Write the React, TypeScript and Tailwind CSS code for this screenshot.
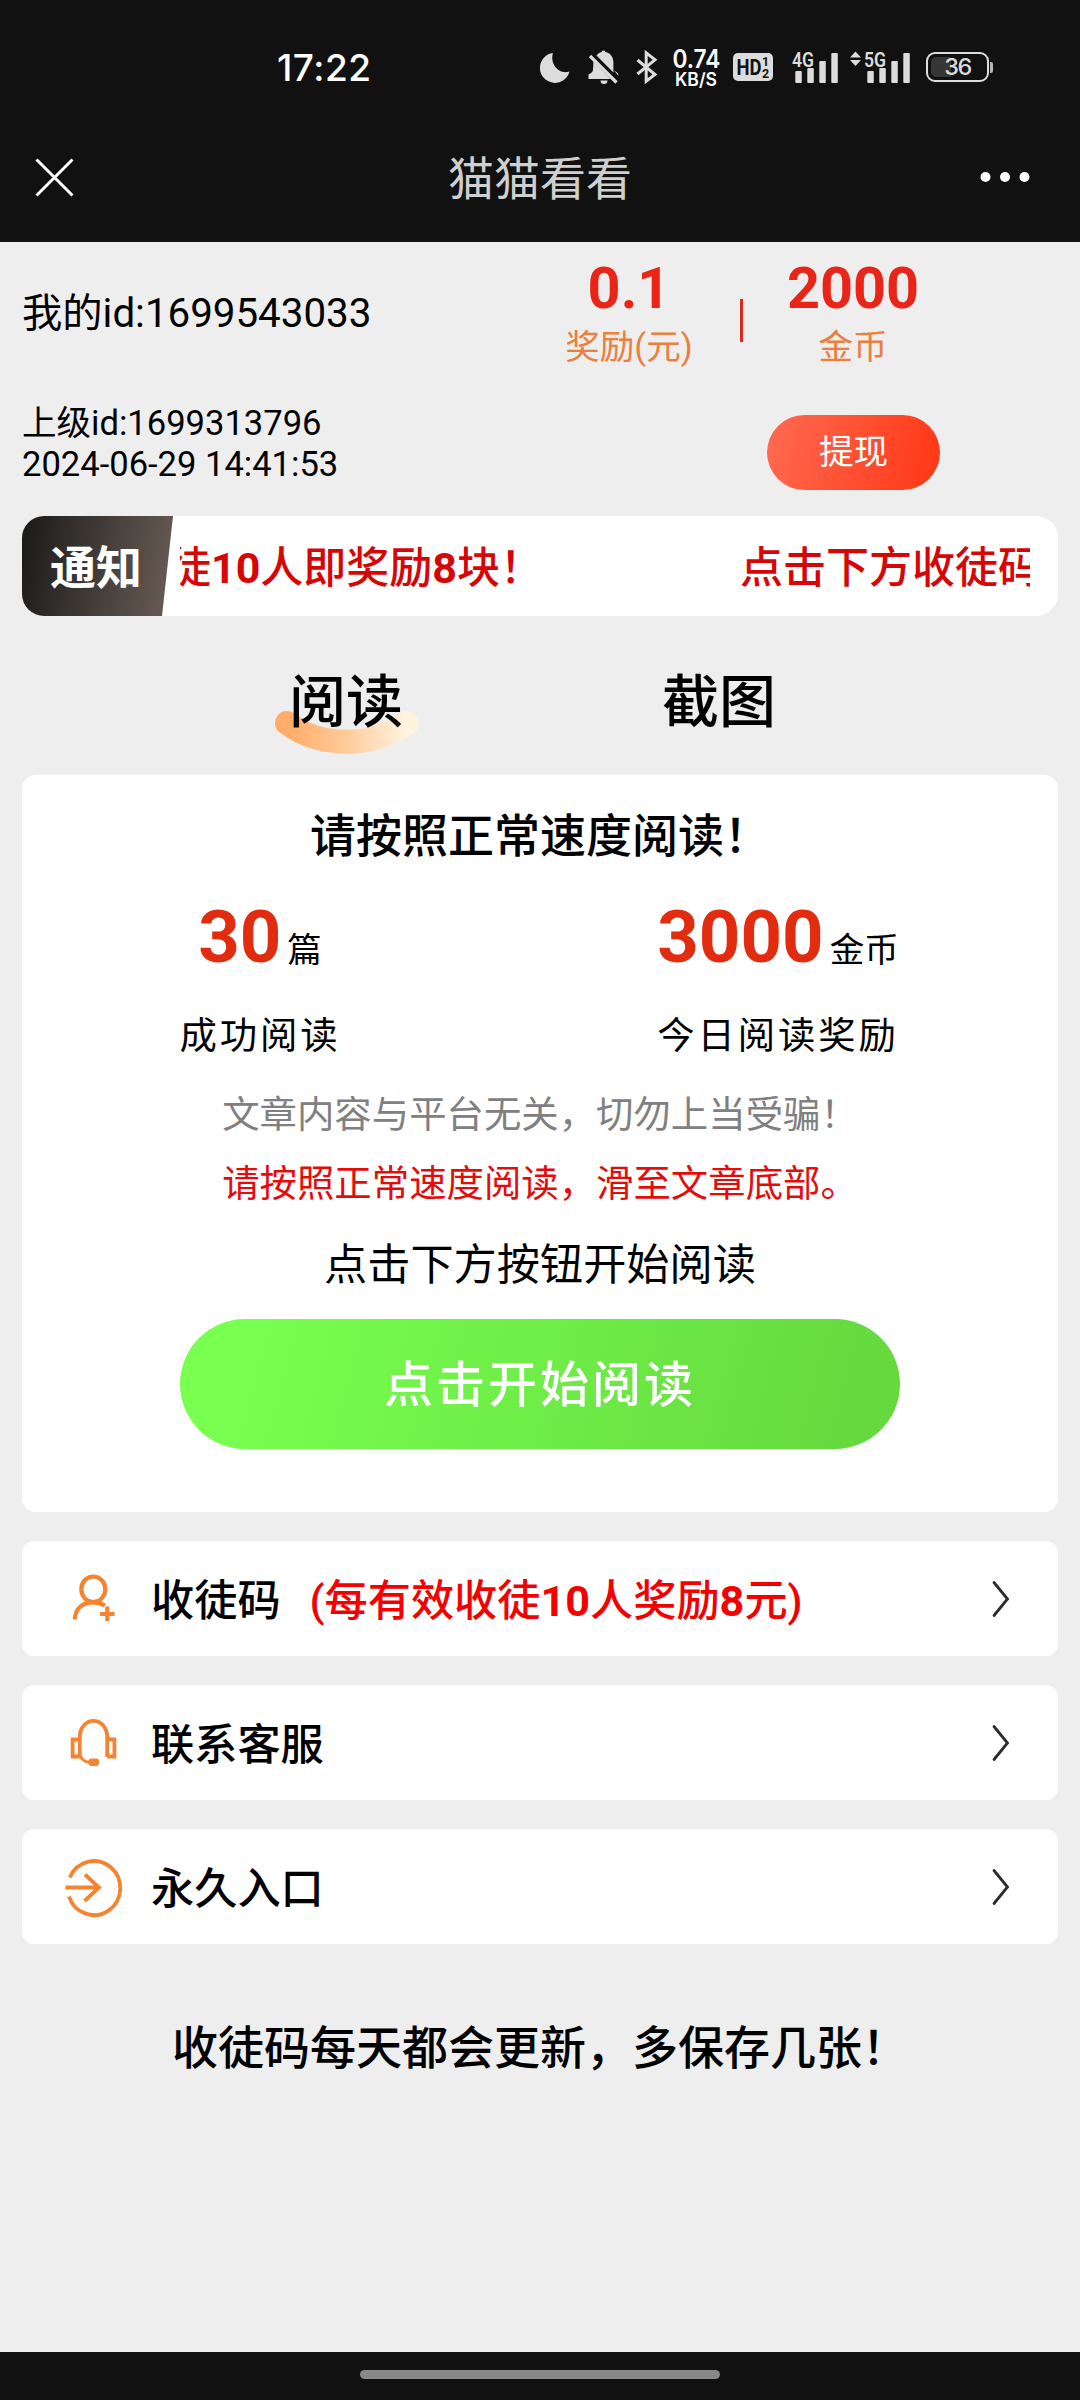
import React from "react";

const ORANGE = "#f6832f";

function SignalIcon({ label, arrows }: { label: string; arrows?: boolean }) {
  return (
    <svg width="64" height="36" viewBox="0 0 64 36" fill="#dcdcdc">
      {arrows && <path d="M5.5 2.5 11 8.5H0zM5.5 17 11 11H0z" />}
      <text x="14" y="17.500" fontSize="21" fontWeight="600" fontFamily="Roboto, sans-serif" textLength="22" lengthAdjust="spacingAndGlyphs">
        {label}
      </text>
      <rect x="17.3" y="22" width="6.5" height="12" rx="1" />
      <rect x="29.3" y="19" width="6.5" height="15" rx="1" />
      <rect x="41.3" y="12" width="6.5" height="22" rx="1" />
      <rect x="53.3" y="4" width="6.5" height="30" rx="1" />
    </svg>
  );
}

function StatusBar() {
  return (
    <div className="flex h-[134px] items-center pl-[277px] font-['Inter','Roboto',sans-serif]">
      <div className="w-[262px] pt-[1px] text-[37px] leading-[44px] font-medium tracking-[0.5px] text-white">17:22</div>
      <svg width="32" height="36" viewBox="0 0 32 36" fill="#dcdcdc">
        <path d="M14 4A15 15 0 1 0 30.500 22.500C20 26 10.500 15 14 4z" />
      </svg>
      <svg className="ml-[16px]" width="34" height="38" viewBox="0 0 34 38" fill="#dcdcdc">
        <path d="M9.500 7.500C11 5.500 13 4.300 14.600 4a2 2 0 0 1 3.800 0c5 1 8 5.200 8 10.500v10zM6.500 13l17 18H1.500v-4.500c2.500-1.200 4.500-2.500 4.500-5zM13.500 32.500h7a3.500 3.500 0 0 1-7 0z" />
        <path d="M27 22.500c2 1.500 4.500 2 4.500 5.500z" />
        <path d="M3 8 29.500 34.500" stroke="#dcdcdc" strokeWidth="3.200" />
      </svg>
      <svg className="ml-[15px]" width="22" height="36" viewBox="0 0 22 36" fill="none" stroke="#dcdcdc" strokeWidth="3">
        <path d="M1.500 11 19 25.500 10.200 32.200V3.800L19 10.800 1.500 25" />
      </svg>
      <svg className="ml-[13px] overflow-visible" width="52" height="44" viewBox="0 0 52 44" fill="#fff" fontFamily="Inter, sans-serif" fontWeight="600">
        <text x="1.500" y="22.500" fontSize="26" textLength="48" lengthAdjust="spacingAndGlyphs">0.74</text>
        <text x="4" y="41" fontSize="18" textLength="42" lengthAdjust="spacingAndGlyphs">KB/S</text>
      </svg>
      <svg className="ml-[10px] overflow-visible" width="40" height="28" viewBox="0 0 40 28" fill="#111" fontFamily="Roboto, sans-serif" fontWeight="700">
        <rect width="40" height="28" rx="5" fill="#dcdcdc" />
        <text x="3.500" y="22" fontSize="22.500" textLength="25" lengthAdjust="spacingAndGlyphs">HD</text>
        <text x="29" y="13" fontSize="12.500">1</text>
        <text x="29" y="24.500" fontSize="12.500">2</text>
      </svg>
      <div className="ml-[5px]">
        <SignalIcon label="4G" />
      </div>
      <div className="ml-[8px]">
        <SignalIcon label="5G" arrows />
      </div>
      <div className="ml-[12px] flex items-center">
        <div className="relative flex h-[30px] w-[63px] items-center justify-center rounded-[9px] border-2 border-[#dcdcdc]">
          <div className="absolute top-[3px] left-[3px] h-[20px] w-[20px] rounded-l-[5px] bg-[#363636]" />
          <span className="relative text-[23.500px] leading-[28px] font-medium tracking-[-1.500px] text-[#dcdcdc]">36</span>
        </div>
        <div className="ml-[1px] h-[11px] w-[3px] rounded-r-[2px] bg-[#b5b5b5]" />
      </div>
    </div>
  );
}

function NavBar() {
  return (
    <div className="flex h-[108px] items-start justify-between px-[34px] pt-[13px]">
      <svg className="mt-[9px]" width="120" height="44" viewBox="0 0 120 44" fill="none" stroke="#fff" strokeWidth="3">
        <path d="M2.500 3.500 38.500 39.500M38.500 3.500 2.500 39.500" />
      </svg>
      <h1 className="h-[64px] text-[46px] leading-[64px] text-[#cfcfcf]">猫猫看看</h1>
      <svg className="mt-[20px]" width="120" height="20" viewBox="0 0 120 20" fill="#fff">
        <circle cx="59.5" cy="10" r="5" />
        <circle cx="79" cy="10" r="5" />
        <circle cx="98.5" cy="10" r="5" />
      </svg>
    </div>
  );
}

function Profile() {
  return (
    <section className="flex h-[274px] pl-[22px]">
      <div className="w-[516px] pt-[48px]">
        <div className="text-[40.300px] leading-[48px]">我的id:1699543033</div>
        <div className="mt-[65px] text-[34.560px] leading-[41px]">
          <div>上级id:1699313796</div>
          <div>2024-06-29 14:41:53</div>
        </div>
      </div>
      <div>
        <div className="flex items-start pt-[12px]">
          <div className="w-[182px] text-center">
            <div className="text-[57.600px] leading-[70px] font-bold text-[#e92517]">0.1</div>
            <div className="-mt-[2px] text-[34.560px] leading-[50px] text-[#ec7f3d]">奖励(元)</div>
          </div>
          <div className="mt-[45px] ml-[20px] h-[43px] w-[3px] bg-[#df281d]" />
          <div className="ml-[19px] w-[182px] text-center">
            <div className="text-[57.600px] leading-[70px] font-bold text-[#e92517]">2000</div>
            <div className="-mt-[2px] text-[34.560px] leading-[50px] text-[#ec7f3d]">金币</div>
          </div>
        </div>
        <button className="mt-[43px] ml-[229px] block h-[75px] w-[173px] rounded-full bg-[linear-gradient(105deg,#ff6b52,#ff3614)] text-[34.560px] leading-[75px] text-white">
          提现
        </button>
      </div>
    </section>
  );
}

function Notice() {
  return (
    <section className="mx-[22px] flex h-[100px] overflow-hidden rounded-[22px] bg-white">
      <div className="h-full w-[151px] bg-[linear-gradient(100deg,#1a1a19,#6a5e56)] pl-[28px] text-[46px] leading-[104px] font-bold text-white [clip-path:polygon(0_0,100%_0,140px_100%,0_100%)]">
        通知
      </div>
      <div className="ml-[7px] flex w-[850px] overflow-hidden text-[43px] leading-[105px] font-medium whitespace-nowrap text-[#d60606]">
        <span className="-ml-[12px] w-[572px] shrink-0">
          徒<b className="font-bold">10</b>人即奖励<b className="font-bold">8</b>
          {"块\uFF01"}
        </span>
        <span className="shrink-0">点击下方收徒码</span>
      </div>
    </section>
  );
}

function Tabs() {
  return (
    <nav className="flex h-[159px] pt-[46px] text-[57px] leading-[82px] font-medium">
      <div className="relative ml-[275px] w-[144px] text-center">
        <svg className="absolute top-[49px] left-0" width="144" height="44" viewBox="0 0 144 44" fill="none">
          <defs>
            <linearGradient id="smile" gradientUnits="userSpaceOnUse" x1="0" y1="0" x2="144" y2="0">
              <stop offset="0.100" stopColor="#ffad68" />
              <stop offset="0.500" stopColor="#ffcb9b" />
              <stop offset="0.900" stopColor="#fff2de" />
            </linearGradient>
          </defs>
          <path d="M12 12C45 37 99 37 132 12" stroke="url(#smile)" strokeWidth="24" strokeLinecap="round" />
        </svg>
        <span className="relative -left-[1px]">阅读</span>
      </div>
      <div className="ml-[228px] w-[144px] text-center">截图</div>
    </nav>
  );
}

function Stat({ value, unit, label }: { value: string; unit: string; label: string }) {
  return (
    <div className="w-[518px] text-center">
      <div className="flex h-[90px] items-baseline justify-center leading-[90px]">
        <span className="text-[72.500px] font-bold text-[#e22c10]">{value}</span>
        <span className="ml-[6px] text-[34.560px]">{unit}</span>
      </div>
      <div className="mt-[28px] text-[37.400px] leading-[50px] tracking-[2.900px]">{label}</div>
    </div>
  );
}

function ReadingCard() {
  return (
    <section className="mx-[22px] h-[737px] rounded-[14px] bg-white pt-[30px] text-center">
      <h2 className="text-[46px] leading-[62px] font-medium">{"请按照正常速度阅读\uFF01"}</h2>
      <div className="mt-[26px] -ml-[21px] flex">
        <Stat value="30" unit="篇" label="成功阅读" />
        <Stat value="3000" unit="金币" label="今日阅读奖励" />
      </div>
      <p className="mt-[27px] text-[37.400px] leading-[54px] text-[#808080]">{"文章内容与平台无关\uFF0C切勿上当受骗\uFF01"}</p>
      <p className="mt-[15px] text-[37.400px] leading-[54px] text-[#e60b0b]">{"请按照正常速度阅读\uFF0C滑至文章底部。"}</p>
      <p className="mt-[25px] text-[43.200px] leading-[60px]">点击下方按钮开始阅读</p>
      <button className="mt-[23px] h-[130px] w-[720px] rounded-full bg-[linear-gradient(105deg,#78ff50_8%,#65d93e_95%)] text-[49px] leading-[134px] font-medium tracking-[3px] text-white">
        点击开始阅读
      </button>
    </section>
  );
}

function InviteIcon() {
  return (
    <svg width="60" height="60" viewBox="0 0 60 60" fill="none" stroke={ORANGE} strokeWidth="4.200">
      <ellipse cx="29.300" cy="20.300" rx="12" ry="12.800" />
      <path d="M10.700 50.500C11.200 39.500 19 33.300 28.500 33.300c5 0 8.500 1 12.500 3.200" />
      <path d="M43.300 37.500v14.500M36 45H50.500" strokeWidth="4.200" />
    </svg>
  );
}

function SupportIcon() {
  return (
    <svg width="60" height="60" viewBox="0 0 60 60" fill="none" stroke={ORANGE} strokeWidth="3.800">
      <path d="M15.800 44V23.500a13.700 15.700 0 0 1 27.400 0V44" />
      <path d="M15.800 26.500H8.600v17h7.200M43.200 26.500h7.200v17h-7.200" />
      <path d="M16.500 43c1.500 3.500 5 6 9 6.500" strokeWidth="3" />
      <rect x="24.500" y="45.500" width="10.500" height="7.500" rx="3" fill={ORANGE} stroke="none" />
    </svg>
  );
}

function EnterIcon() {
  return (
    <svg className="overflow-visible" width="60" height="60" viewBox="0 0 60 60" fill="none" stroke={ORANGE} strokeWidth="3.800">
      <path d="M5.800 20.500A26.300 27 0 1 1 5 39.500" />
      <path d="M1.500 30.500H35.500M21 17.500 35 30.500 20.500 44" />
    </svg>
  );
}

function MenuRow({ icon, title, note }: { icon: React.ReactNode; title: string; note?: React.ReactNode }) {
  return (
    <div className="flex h-[115px] items-center rounded-[12px] bg-white pl-[42px] text-[43.200px] leading-[60px] font-medium">
      {icon}
      <span className="ml-[27px] pt-[6px]">{title}</span>
      {note && <span className="ml-[29px] pt-[6px] text-[#f40000]">{note}</span>}
      <svg className="mr-[47px] ml-auto" width="20" height="40" viewBox="0 0 20 40" fill="none" stroke="#2b2b2d" strokeWidth="2.800" strokeLinecap="round">
        <path d="M3 3.500 16.500 20 3 36.500" />
      </svg>
    </div>
  );
}

export default function App() {
  return (
    <div lang="zh-CN" className="flex h-[2400px] w-[1080px] flex-col overflow-hidden bg-[#eeeeee] font-['Roboto','Noto_Sans_CJK_SC',sans-serif] text-black">
      <header className="h-[242px] bg-[#111]">
        <StatusBar />
        <NavBar />
      </header>
      <main className="flex-1">
        <Profile />
        <Notice />
        <Tabs />
        <ReadingCard />
        <div className="mx-[22px] mt-[29px] flex flex-col gap-[29px]">
          <MenuRow
            icon={<InviteIcon />}
            title="收徒码"
            note={
              <>
                (每有效收徒<b className="font-bold">10</b>人奖励<b className="font-bold">8</b>元)
              </>
            }
          />
          <MenuRow icon={<SupportIcon />} title="联系客服" />
          <MenuRow icon={<EnterIcon />} title="永久入口" />
        </div>
        <p className="mt-[73px] text-center text-[46px] leading-[62px] font-medium">{"收徒码每天都会更新\uFF0C多保存几张\uFF01"}</p>
      </main>
      <footer className="flex h-[48px] justify-center bg-[#111] pt-[18px]">
        <div className="h-[9px] w-[360px] rounded-full bg-[#888]" />
      </footer>
    </div>
  );
}
